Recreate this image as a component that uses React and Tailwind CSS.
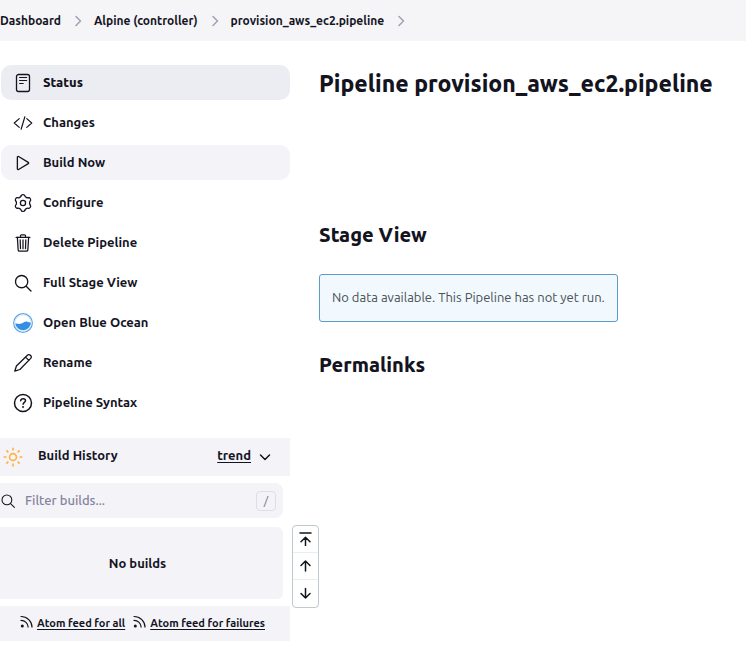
import React from "react";

function Icon({ className = "size-5", width = 32, viewBox = "0 0 512 512", children }) {
  return (
    <svg
      className={`${className} shrink-0`}
      viewBox={viewBox}
      fill="none"
      stroke="currentColor"
      strokeWidth={width}
      strokeLinecap="round"
      strokeLinejoin="round"
      aria-hidden="true"
    >
      {children}
    </svg>
  );
}

const StatusIcon = () => (
  <Icon viewBox="0 0 20 20" width={1.3}>
    <rect x="3.5" y="1.5" width="13" height="17" rx="2" />
    <path d="M6.600 4.500h7M6.600 7.500h7M6.600 10.500h3.600" strokeWidth="1.200" />
  </Icon>
);

const ChangesIcon = () => (
  <Icon width={30}>
    <path d="M160 368L32 256l128-112M352 368l128-112-128-112M304 96l-96 320" />
  </Icon>
);

const PlayIcon = () => (
  <Icon width={34}>
    <path d="M112 111v290c0 17.400 17 28.500 31 20.200l247.900-148.400c12.100-7.200 12.100-26.200 0-33.500L143 90.900c-14-8.400-31 2.700-31 20.100z" />
  </Icon>
);

const GearIcon = () => (
  <Icon viewBox="0 0 20 20" width={1.3}>
    <circle cx="10" cy="10" r="2.600" />
    {[0, 60, 120, 180, 240, 300].map((angle) => (
      <path
        key={angle}
        transform={`rotate(${angle} 10 10)`}
        d="M8.200 2.600C8.500 1.200 11.500 1.200 11.800 2.600C12.100 4 14.150 5.180 15.510 4.740"
      />
    ))}
  </Icon>
);

const TrashIcon = () => (
  <Icon width={32}>
    <path d="M112 112l20 320c.95 18.490 14.400 32 32 32h184c17.670 0 30.870-13.510 32-32l20-320" />
    <path d="M80 112h352M192 112V72a23.930 23.930 0 0124-24h80a23.930 23.930 0 0124 24v40M256 176v224M184 176l8 224M328 176l-8 224" />
  </Icon>
);

const SearchIcon = ({ className }) => (
  <Icon width={34} className={className}>
    <path d="M221.090 64a157.090 157.090 0 10157.090 157.090A157.100 157.100 0 00221.090 64z" />
    <path d="M338.290 338.290L460 460" />
  </Icon>
);

const OceanIcon = () => (
  <svg className="size-5 shrink-0" viewBox="0 0 20 20" aria-hidden="true">
    <circle cx="10" cy="10" r="9.300" fill="#fff" stroke="#5ca6e6" strokeWidth="1.300" />
    <circle cx="10" cy="10" r="8.200" fill="none" stroke="#cfe5f8" strokeWidth=".8" />
    <path d="M2.200 10.600c1.600-.7 3 .6 5.200.2 2.800-.5 3.600-2.300 6-2.200 1.700.1 2.500 1.300 4.500.9a7.900 7.900 0 01-15.700 1.100z" fill="#348fe2" />
  </svg>
);

const PencilIcon = () => (
  <Icon viewBox="0 0 20 20" width={1.300}>
    <path d="M1.800 18.200l1.600-5.200L14.400 2.200c2-1.800 5 1.100 3.300 3.200L6.900 16.500zM12.500 4.100l3.400 3.300" />
  </Icon>
);

const HelpIcon = () => (
  <Icon viewBox="0 0 20 20" width={1.500}>
    <circle cx="10" cy="10" r="8.500" />
    <path d="M7.700 7.800c.1-1.500 1.100-2.100 2.400-2.100s2.400.8 2.400 2c0 1.600-2.400 1.700-2.400 3.600" />
    <circle cx="10.100" cy="14.100" r=".3" />
  </Icon>
);

const SunIcon = () => (
  <Icon width={42} className="size-5 text-[#ffb340]">
    <path strokeLinecap="butt" d="M256 16v72M256 424v72M426 86l-51 51M137 375l-51 51M496 256h-72M88 256H16M426 426l-51-51M137 137l-51-51" />
    <circle cx="256" cy="256" r="88" />
  </Icon>
);

const FeedIcon = () => (
  <Icon viewBox="0 0 14 14" width={1.200} className="mb-1 size-3.5">
    <circle cx="2.300" cy="11" r=".9" fill="currentColor" />
    <path d="M1 5.400c4 0 7.100 3.100 7.100 6.700M1 1.500c6.100 0 11 4.800 11 10.600" />
  </Icon>
);

const Chevron = ({ d, className }) => (
  <Icon viewBox="0 0 12 12" width={1.500} className={className}>
    <path d={d} />
  </Icon>
);

const tasks = [
  { label: "Status", icon: StatusIcon, look: "bg-[#ecedf3] font-extrabold" },
  { label: "Changes", icon: ChangesIcon, look: "font-semibold" },
  { label: "Build Now", icon: PlayIcon, look: "bg-[#f3f3f8] font-semibold" },
  { label: "Configure", icon: GearIcon, look: "font-semibold" },
  { label: "Delete Pipeline", icon: TrashIcon, look: "font-semibold" },
  { label: "Full Stage View", icon: SearchIcon, look: "font-semibold" },
  { label: "Open Blue Ocean", icon: OceanIcon, look: "font-semibold" },
  { label: "Rename", icon: PencilIcon, look: "font-semibold" },
  { label: "Pipeline Syntax", icon: HelpIcon, look: "font-semibold" },
];

const crumbs = ["Dashboard", "Alpine (controller)", "provision_aws_ec2.pipeline"];

const pageButtons = [
  { label: "Newest builds", d: "M1 1h11M6.500 13.500V5.500M2 9.800L6.500 5.300l4.500 4.500" },
  { label: "Newer builds", d: "M6.500 12V2M2 6.500L6.500 2 11 6.500" },
  { label: "Older builds", d: "M6.500 1.500V11M2 6.500L6.500 11 11 6.500" },
];

export default function App() {
  return (
    <div className="bg-white font-['Ubuntu','Open_Sans',sans-serif] text-[13px] text-[#14141f]">
      <nav aria-label="Breadcrumb" className="h-[41px] bg-[#f5f5f8]">
        <ol className="flex h-full items-center gap-2.5 text-xs font-semibold">
          {crumbs.map((name) => (
            <li key={name} className="flex items-center gap-[11px]">
              <a href="#">{name}</a>
              <Chevron d="M4 1.500L8.500 6 4 10.500" className="size-3 text-[#a0a0b4]" />
            </li>
          ))}
        </ol>
      </nav>

      <div className="flex items-start">
        <aside className="relative w-[290px] shrink-0 pt-6">
          <nav aria-label="Tasks" className="flex flex-col gap-[5px] pl-px">
            {tasks.map(({ label, icon: Glyph, look }) => (
              <a key={label} href="#" className={`flex h-[35px] items-center gap-2.5 rounded-[10px] px-3 ${look}`}>
                <Glyph />
                {label}
              </a>
            ))}
          </nav>

          <section aria-label="Build History" className="mt-[18px] flex flex-col gap-[7px]">
            <div className="flex h-[38px] items-center bg-[#f3f3f8] pr-[19px] pl-[3px]">
              <SunIcon />
              <h2 className="ml-[15px] flex-1 pb-0.5 text-[13px] font-bold">Build History</h2>
              <a href="#" className="pb-0.5 font-bold underline underline-offset-2">trend</a>
              <button type="button" aria-label="Collapse build history" className="ml-2">
                <Chevron d="M1.500 4L6 8.500 10.500 4" className="size-3" />
              </button>
            </div>

            <div className="mr-[7px] flex h-[35px] items-center rounded-r-lg bg-[#f3f3f8] pr-[7px]">
              <SearchIcon className="size-4" />
              <input
                type="search"
                aria-label="Filter builds"
                placeholder="Filter builds..."
                className="ml-[9px] min-w-0 flex-1 bg-transparent font-medium outline-none placeholder:text-[#83839c]"
              />
              <kbd className="flex size-5 items-center justify-center rounded border border-[#dedee8] font-['Ubuntu','Open_Sans',sans-serif] text-xs text-[#73738c]">/</kbd>
            </div>

            <div className="mt-0.5 mr-[7px] flex h-[72px] items-center justify-center rounded-r-md bg-[#f3f3f8] pt-0.5 pr-2 font-bold">
              No builds
            </div>

            <div className="flex h-[35px] items-center gap-2 bg-[#f3f3f8] pl-5 text-[11px] font-bold">
              <a href="#" className="flex items-center gap-[3px] underline underline-offset-2"><FeedIcon />Atom feed for all</a>
              <a href="#" className="flex items-center gap-[3px] underline underline-offset-2"><FeedIcon />Atom feed for failures</a>
            </div>
          </section>

          <div className="absolute bottom-[33px] left-[292px] flex w-[27px] flex-col divide-y divide-[#ececf1] rounded border border-[#bfcad0] bg-white">
            {pageButtons.map(({ label, d }) => (
              <button key={label} type="button" aria-label={label} className="flex h-[27px] items-center justify-center">
                <Icon viewBox="0 0 14 14" width={1.500} className="size-3.5"><path d={d} /></Icon>
              </button>
            ))}
          </div>
        </aside>

        <main className="min-w-0 flex-1 pt-[27px] pl-[29px]">
          <h1 className="text-[23px]/8 font-extrabold">Pipeline provision_aws_ec2.pipeline</h1>
          <h2 className="mt-[121px] text-xl font-extrabold">Stage View</h2>
          <p className="mt-[25px] flex h-12 w-fit items-center rounded-[3px] border border-[#5b9bc8] bg-[#f1f9fe] px-3 text-[#4a5055]">
            No data available. This Pipeline has not yet run.
          </p>
          <h2 className="mt-[29px] text-xl font-extrabold">Permalinks</h2>
        </main>
      </div>
    </div>
  );
}
